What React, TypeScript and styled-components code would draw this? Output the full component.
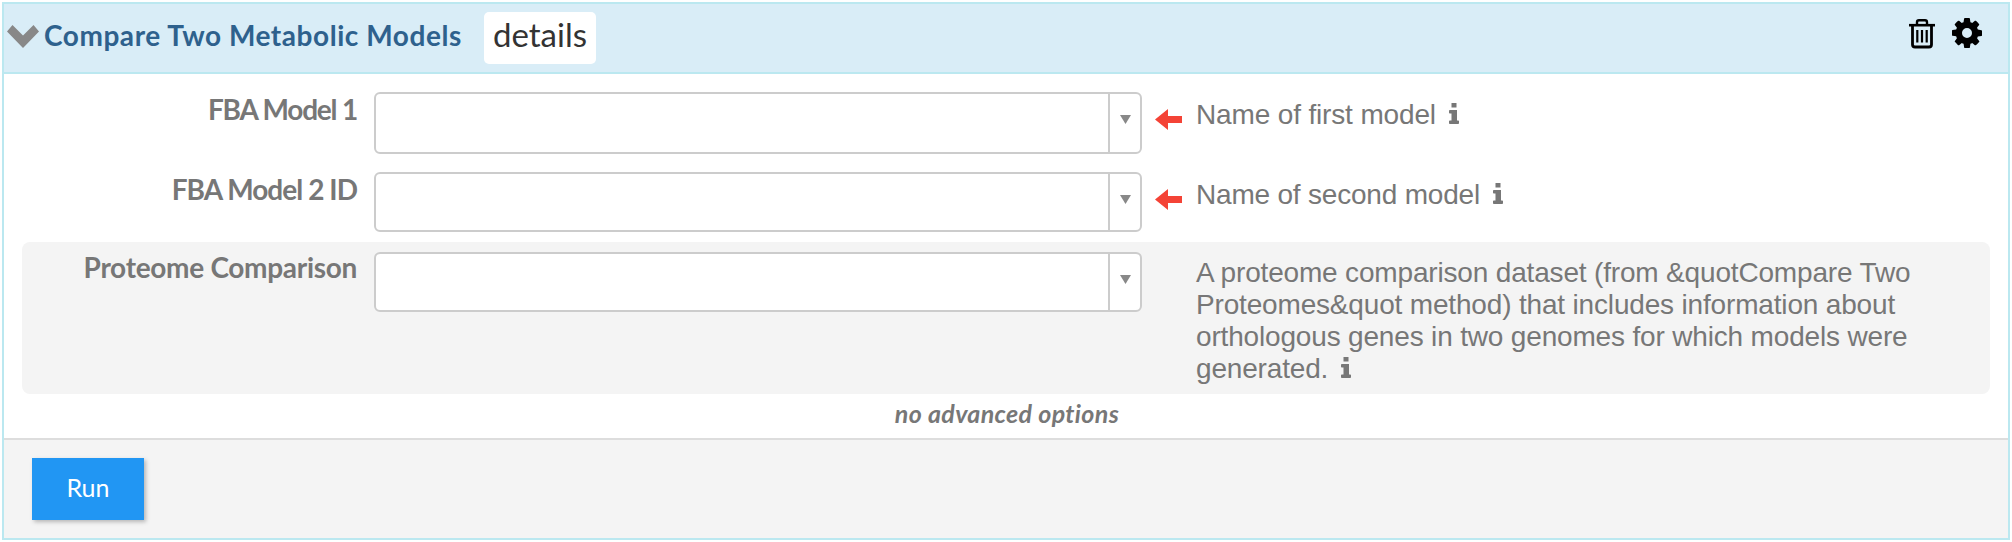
import React from "react";
import styled, { createGlobalStyle } from "styled-components";

const Global = createGlobalStyle`
  *{box-sizing:border-box}
  html,body{margin:0;background:#fff}
`;
const heading = `Lato, "Noto Sans", sans-serif`;

const Cell = styled.section`
  margin: 2px;
  width: 2008px;
  height: 538px;
  border: 2px solid #bbe8f0;
  display: flex;
  flex-direction: column;
  font-family: ${heading};
  color: #777;
`;
const Header = styled.header`
  height: 70px;
  flex: none;
  background: #d9edf7;
  border-bottom: 2px solid #bbe8f0;
  display: flex;
  align-items: flex-start;
  padding-right: 26px;
`;
const Chevron = styled.svg`
  margin: 21px 5px 0 3px;
  flex: none;
`;
const Spaced = styled.span<{ $ls?: number }>`
  letter-spacing: ${(p) => p.$ls ?? 0}px;
  white-space: nowrap;
`;
const Title = styled.h1`
  margin: 11px 0 0;
  width: 440px;
  font-size: 28px;
  line-height: 40px;
  font-weight: 700;
  color: #2e618d;
`;
const Details = styled.button`
  margin-top: 8px;
  width: 112px;
  height: 52px;
  border: 0;
  border-radius: 5px;
  background: #fff;
  color: #333;
  font-family: ${heading};
  font-size: 33px;
  line-height: 40px;
  padding: 0 0 9px;
`;
const Tools = styled.div`
  margin: 14px 0 0 auto;
  display: flex;
  gap: 17px;
`;
const GearIcon = styled.svg`
  display: block;
`;
const Body = styled.div`
  height: 364px;
  flex: none;
  padding: 10px 18px 0;
`;
const Row = styled.div<{ $h: number; $shaded?: boolean }>`
  display: flex;
  height: ${(p) => p.$h}px;
  padding-top: ${(p) => (p.$shaded ? 10 : 8)}px;
  border-radius: 8px;
  background: ${(p) => (p.$shaded ? "#f4f4f4" : "transparent")};
`;
const Label = styled.label<{ $raised?: boolean }>`
  width: 335px;
  margin: ${(p) => (p.$raised ? -3 : -1)}px 17px 0 0;
  text-align: right;
  font-size: 28px;
  line-height: 36px;
  font-weight: 700;
`;
const Select = styled.div<{ $h: number }>`
  width: 768px;
  height: ${(p) => p.$h}px;
  border: 2px solid #ccc;
  border-radius: 6px;
  background: #fff;
  display: flex;
  justify-content: flex-end;
`;
const Drop = styled.div`
  width: 32px;
  border-left: 2px solid #ccc;
  padding: 21px 0 0 10px;
  line-height: 0;
`;
const Required = styled.div`
  width: 54px;
  padding: 17px 0 0 13px;
  line-height: 0;
`;
const Hint = styled.p<{ $raised?: boolean; $ls: number }>`
  margin: ${(p) => (p.$raised ? 5 : 7)}px 0 0;
  width: 740px;
  font: 28px/32px "Liberation Sans", Arial, sans-serif;
  letter-spacing: ${(p) => p.$ls}px;
`;
const InfoMark = styled.svg`
  margin-left: 13px;
`;
const Advanced = styled.div`
  text-align: center;
  font-size: 25px;
  line-height: 36px;
  padding: 1px 0 0 2px;
  font-weight: 700;
  font-style: italic;
`;
const Footer = styled.footer`
  flex: 1;
  border-top: 2px solid #ddd;
  background: #f4f4f4;
  padding: 18px 28px;
`;
const Run = styled.button`
  width: 112px;
  height: 62px;
  border: 0;
  background: #2196f3;
  color: #fff;
  box-shadow: 2px 2px 4px rgba(0, 0, 0, 0.25);
  font-family: ${heading};
  font-size: 25px;
  line-height: 36px;
  padding: 0 0 5px;
`;

const Info = () => (
  <InfoMark width="10" height="21" viewBox="0 0 10 21" fill="#777">
    <path d="M2.5 0h5v4.4h-5zM.5 7H8v10.500h1.200q.8 0 .8.8V20q0 1-.8 1H.8Q0 21 0 20v-1.700q0-.8.8-.8H2.500v-7H.8Q0 10.500 0 9.700V8q0-1 .8-1z" />
  </InfoMark>
);

const Trash = () => (
  <svg width="26" height="32" viewBox="0 0 26 32" fill="none" stroke="#000">
    <path d="M0 7.200h26" strokeWidth="2.600" />
    <path d="M8 7V4.300Q8 2.200 10 2.200h6q2 0 2 2.100V7" strokeWidth="2.400" />
    <path d="M3.500 7v19.500q0 2.500 2.500 2.500h14q2.500 0 2.500-2.500V7" strokeWidth="2.800" />
    <path d="M8.300 12v12.500M13 12v12.500M17.700 12v12.500" strokeWidth="2.200" />
  </svg>
);

const Gear = () => (
  <GearIcon width="30" height="30" viewBox="0 128 1536 1536">
    <path d="M1024 896q0-106-75-181t-181-75-181 75-75 181 75 181 181 75 181-75 75-181zm512-109v222q0 12-8 23t-20 13l-185 28q-19 54-39 91 35 50 107 138 10 12 10 25t-9 23q-27 37-99 108t-94 71q-12 0-26-9l-138-108q-44 23-91 38-16 136-29 186-7 28-36 28h-222q-14 0-24.500-8.500t-11.500-21.500l-28-184q-49-16-90-37l-141 107q-10 9-25 9-14 0-25-11-126-114-165-168-7-10-7-23 0-12 8-23 15-21 51-66.500t54-70.500q-27-50-41-99l-183-27q-13-2-21-12.500t-8-23.500v-222q0-12 8-23t19-13l186-28q14-46 39-92-40-57-107-138-10-12-10-24 0-10 9-23 26-36 98.500-107.500t94.500-71.500q13 0 26 10l138 107q44-23 91-38 16-136 29-186 7-28 36-28h222q14 0 24.500 8.500t11.500 21.500l28 184q49 16 90 37l142-107q9-9 24-9 13 0 25 10 129 119 165 170 7 8 7 22 0 12-8 23-15 21-51 66.500t-54 70.500q26 50 41 98l183 28q13 2 21 12.500t8 23.500z" />
  </GearIcon>
);

const fields = [
  { label: "FBA Model 1", ls: -1.2, row: 80, box: 62, required: true, hint: "Name of first model", hintLs: -0.15 },
  { label: "FBA Model 2 ID", ls: -0.95, row: 78, box: 60, required: true, hint: "Name of second model", hintLs: -0.2 },
  {
    label: "Proteome Comparison", ls: -0.3, row: 152, box: 60, required: false, hintLs: -0.17,
    hint: "A proteome comparison dataset (from &quotCompare Two Proteomes&quot method) that includes information about orthologous genes in two genomes for which models were generated.",
  },
];

export default function App() {
  return (
    <>
      <Global />
      <Cell>
        <Header>
          <Chevron width="32" height="23" viewBox="0 0 32 23">
            <path d="M5.500 0 16 10.500 26.500 0 32 6.500 16 23 0 6.500z" fill="#888" />
          </Chevron>
          <Title><Spaced $ls={0.55}>Compare Two Metabolic Models</Spaced></Title>
          <Details><Spaced>details</Spaced></Details>
          <Tools>
            <Trash />
            <Gear />
          </Tools>
        </Header>
        <Body>
          {fields.map((f) => (
            <Row key={f.label} $h={f.row} $shaded={!f.required}>
              <Label $raised={!f.required}><Spaced $ls={f.ls}>{f.label}</Spaced></Label>
              <Select $h={f.box}>
                <Drop>
                  <svg width="11" height="9"><path d="M0 0h11L5.500 9z" fill="#888" /></svg>
                </Drop>
              </Select>
              <Required>
                {f.required && (
                  <svg width="27" height="21"><path d="M0 10.500 13 0v7h14v7H13v7z" fill="#f44336" /></svg>
                )}
              </Required>
              <Hint $raised={!f.required} $ls={f.hintLs}>{f.hint}<Info /></Hint>
            </Row>
          ))}
          <Advanced><Spaced $ls={0.35}>no advanced options</Spaced></Advanced>
        </Body>
        <Footer><Run><Spaced>Run</Spaced></Run></Footer>
      </Cell>
    </>
  );
}
